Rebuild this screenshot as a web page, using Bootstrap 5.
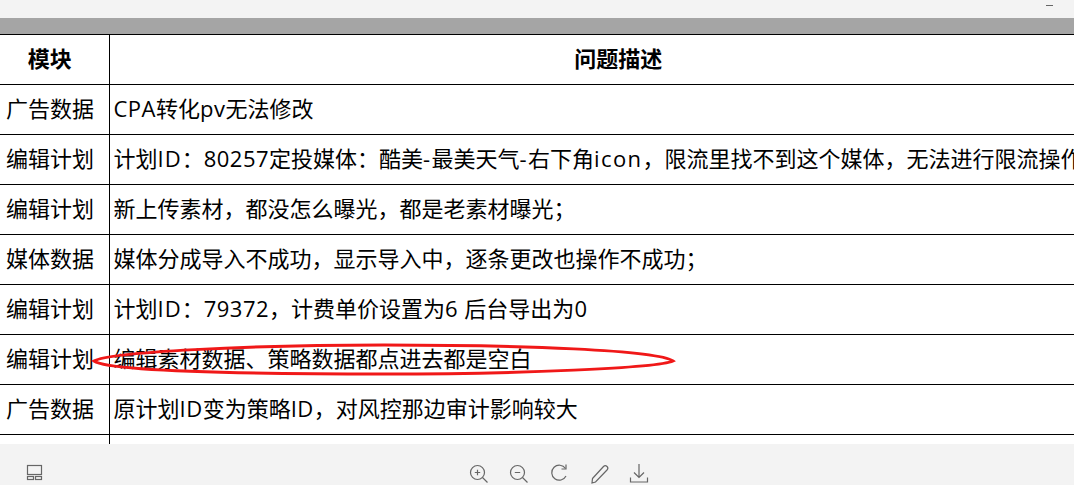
<!DOCTYPE html>
<html lang="zh">
<head>
<meta charset="utf-8">
<title>问题描述</title>
<link href="https://cdn.jsdelivr.net/npm/bootstrap@5.3.0/dist/css/bootstrap.min.css" rel="stylesheet">
<style>
html,body{height:485px;overflow:hidden;background:#f3f3f3}
body{font-family:"Open Sans","Noto Sans CJK SC",sans-serif;color:#000}
.topbar{height:18px;background:#f3f3f3}
.winmin{width:7px;height:1px;background:#666;margin:5px 21px 0 0}
.greybar{height:16px;background:#a5a5a5}
.docview{height:410px;background:#fff;overflow:hidden}
.doctable{width:1127px;table-layout:fixed;border-collapse:collapse;font-size:22px;line-height:30px}
.doctable th,.doctable td{height:50px;padding:0 0 4px 4px;border:1px solid #000;border-left:0;border-right:0;white-space:nowrap;overflow:hidden;vertical-align:middle;font-weight:400}
.doctable th{text-align:center;font-weight:700;padding:0 0 4px}
.doctable .colmod{width:109px;border-right:1px solid #000;padding-left:6px}
.doctable th.colmod{padding:0 9px 4px 0}
.ltn{letter-spacing:.5px}
.lti{letter-spacing:1px}
.lth{letter-spacing:.5px}
.ltw{letter-spacing:1.4px}
.redmark{position:absolute;left:90px;top:340px;width:590px;height:40px;pointer-events:none}
.botbar{height:41px;background:#f3f3f3;padding:0}
.tool{width:24px;height:24px;display:block;fill:none;stroke:#666;stroke-width:1.2}
.leftico{margin:20px 0 0 26px;width:18px;height:18px}
.toolgroup{gap:16px;margin:18px 0 0 423px}
</style>
</head>
<body class="position-relative">
<div class="topbar d-flex justify-content-end"><div class="winmin"></div></div>
<div class="greybar"></div>
<div class="docview">
<table class="doctable">
<thead>
<tr><th class="colmod">模块</th><th>问题描述</th></tr>
</thead>
<tbody>
<tr><td class="colmod">广告数据</td><td><span class="ltn">CPA</span>转化<span class="ltn">pv</span>无法修改</td></tr>
<tr><td class="colmod">编辑计划</td><td>计划<span class="lti">ID</span>：<span class="ltn">80257</span>定投媒体：酷美<span class="ltw">-</span>最美天气<span class="ltw">-</span>右下角<span class="ltw">icon</span>，限流里找不到这个媒体，无法进行限流操作</td></tr>
<tr><td class="colmod">编辑计划</td><td>新上传素材，都没怎么曝光，都是老素材曝光；</td></tr>
<tr><td class="colmod">媒体数据</td><td>媒体分成导入不成功，显示导入中，逐条更改也操作不成功；</td></tr>
<tr><td class="colmod">编辑计划</td><td>计划<span class="lti">ID</span>：<span class="ltn">79372</span>，计费单价设置为<span class="ltn">6 </span>后台导出为<span class="ltn">0</span></td></tr>
<tr><td class="colmod">编辑计划</td><td>编辑素材数据、策略数据都点进去都是空白</td></tr>
<tr><td class="colmod">广告数据</td><td>原计划<span class="lth">ID</span>变为策略<span class="lth">ID</span>，对风控那边审计影响较大</td></tr>
<tr><td class="colmod"></td><td></td></tr>
</tbody>
</table>
</div>
<svg class="redmark" viewBox="90 340 590 40" aria-hidden="true">
<path d="M94 361C110 352 250 345 384 345C520 345 658 350 673 361C658 368 520 374 384 374C250 374 110 372 94 361Z" fill="none" stroke="#f01818" stroke-width="3"/>
</svg>
<div class="botbar d-flex align-items-start">
<svg class="tool leftico" viewBox="0 0 18 18"><rect x="1.500" y="1.500" width="14" height="9"/><rect x="1.500" y="12.500" width="6" height="3"/><rect x="9.500" y="12.500" width="6" height="3"/></svg>
<div class="toolgroup d-flex">
<svg class="tool" viewBox="0 0 24 24"><circle cx="10.500" cy="10.500" r="7"/><path d="M15.500 15.500l5 5M7.800 10.500h5.400M10.500 7.800v5.400"/></svg>
<svg class="tool" viewBox="0 0 24 24"><circle cx="10.500" cy="10.500" r="7"/><path d="M15.500 15.500l5 5M7.800 10.500h5.400"/></svg>
<svg class="tool" viewBox="0 0 24 24"><path d="M18.500 6.500A7.500 7.500 0 1 0 19 14"/><path d="M19 2.500V7H14.500"/></svg>
<svg class="tool" viewBox="0 0 24 24"><path d="M5.500 16.500L16.500 4.500a2 2 0 0 1 3.500 3.500L8.500 20l-3.500 1z"/></svg>
<svg class="tool" viewBox="0 0 24 24"><path d="M12 2v13M7 10.500l5 5 5-5M3.500 15.500v4.500h17v-4.500"/></svg>
</div>
</div>
</body>
</html>
